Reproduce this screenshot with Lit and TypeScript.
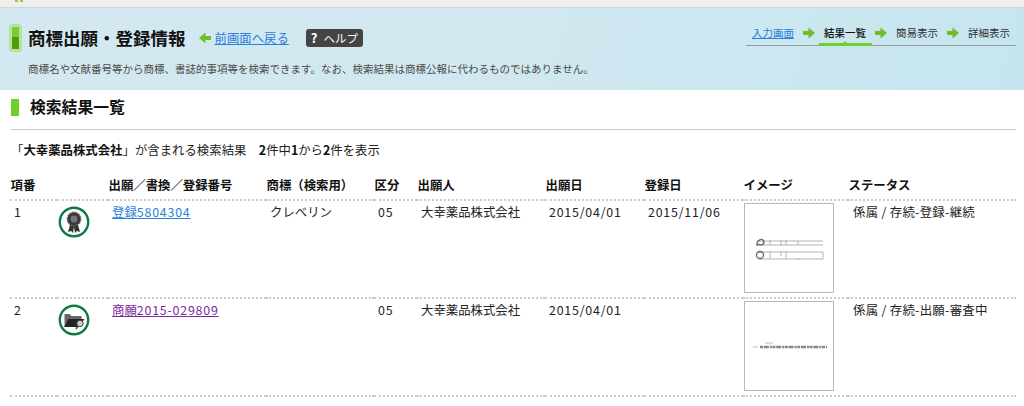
import { LitElement, html, css, svg } from "lit";
import { customElement } from "lit/decorators.js";

const ribbon = svg`<svg width="32" height="32" viewBox="0 0 32 32"><circle cx="16" cy="16" r="14.200" fill="#fff" stroke="#0f7a45" stroke-width="2.400"/>
<path d="M12.500 17 L10 26 L13.200 25 L15 27 L16 21 L17 27 L18.800 25 L22 26 L19.500 17Z" fill="#333"/>
<circle cx="16" cy="13" r="6.800" fill="#3a3a3a" stroke="#666" stroke-width="1.200" stroke-dasharray="2 1"/><circle cx="16" cy="13" r="3.400" fill="#777"/></svg>`;

const folder = svg`<svg width="32" height="32" viewBox="0 0 32 32"><circle cx="16" cy="16" r="14.200" fill="#fff" stroke="#0f7a45" stroke-width="2.400"/>
<path d="M6.500 22 V10 H11.500 L13.500 12 H23.500 V15 H10Z" fill="#666"/><path d="M6 23 L10 15 H26.500 L21 23Z" fill="#222"/>
<circle cx="22" cy="19.500" r="3.200" fill="#ccc" stroke="#444" stroke-width="1"/><path d="M20 22 L18 25" stroke="#444" stroke-width="1.500"/></svg>`;

const thumb1 = svg`<svg width="88" height="88" viewBox="0 0 88 88" class="blur"><g stroke="#aaa" stroke-width=".9" fill="none">
<path d="M12 37 H78 M12 41 H78 M14 48 H78 M14 55 H78 M78 48 V55"/><path d="M25 36 V41 M41 36 V41 M25 47 V54 M41 47 V55 M36 36 V41 M36 47 V52 M53 37 V41 M53 54 V56"/></g>
<g stroke="#666" stroke-width="1.300" fill="none"><path d="M12 42 C11 36 18 33 19 38 C19 42 14 41 13 40"/><circle cx="15" cy="51" r="3.500"/></g></svg>`;

const thumb2 = svg`<svg width="88" height="88" viewBox="0 0 88 88" class="blur"><path d="M15 45 H82" stroke="#888" stroke-width="2.600" stroke-dasharray="3 .8 5 1 2 .6"/><path d="M8 45 H13 M20 41 H28" stroke="#bbb" stroke-width="1"/></svg>`;

const arrow = (dir: "l" | "r") => svg`<svg class="arrow" width="12" height="12" viewBox="0 0 12 12"><path d="${dir === "r" ? "M0 4 H5.500 V.5 L12 6 L5.500 11.500 V8 H0Z" : "M12 4 H6.500 V.5 L0 6 L6.500 11.500 V8 H12Z"}" fill="#6ebd2b"/></svg>`;

const rows = [
  { n: "1", icon: ribbon, pre: "登録", num: "5804304", visited: false, mark: "クレベリン", cls: "05", who: "大幸薬品株式会社", d1: "2015/04/01", d2: "2015/11/06", thumb: thumb1, st: "係属 / 存続-登録-継続" },
  { n: "2", icon: folder, pre: "商願", num: "2015-029809", visited: true, mark: "", cls: "05", who: "大幸薬品株式会社", d1: "2015/04/01", d2: "", thumb: thumb2, st: "係属 / 存続-出願-審査中" },
];

const heads = ["項番", "", "出願／書換／登録番号", "商標（検索用）", "区分", "出願人", "出願日", "登録日", "イメージ", "ステータス"];

@customElement("app-root")
export class AppRoot extends LitElement {
  static styles = css`
    :host { display: block; width: 1024px; height: 406px; overflow: hidden; background: #fff; color: #222;
      font-family: "Noto Sans CJK JP", "Noto Sans", sans-serif; font-size: 12.4px; line-height: 18px; }
    a { color: #2a80d8; text-decoration: underline; }
    a.visited { color: #7a2a9e; }
    .top { height: 7px; background: #f0efee; border-bottom: 1px solid #d6d6d6; padding-left: 15px; display: flex; gap: 2px; }
    .top i { width: 3px; height: 2px; background: #8ed04e; }
    .hero { height: 82px; box-sizing: border-box; padding: 16px 8px 0 10px; display: flex; justify-content: space-between;
      background: linear-gradient(105deg, #d3e8f0 0%, #d2e8f0 45%, #cbe7f0 75%, #c6e5ef 100%); }
    .titlecol { display: flex; flex-direction: column; }
    .titlerow { display: flex; align-items: center; height: 28px; }
    .badge { width: 11px; height: 26px; box-sizing: border-box; border: 2px solid #b5e78f; border-radius: 2px; margin-right: 7px;
      background: linear-gradient(#7cc83a 0 45%, #4f9c12 45%); box-shadow: 0 0 0 .5px #8fd35a; }
    h1 { margin: 0; font-size: 17.500px; font-weight: 700; color: #111; white-space: nowrap; }
    .back { display: flex; align-items: center; gap: 4px; margin-left: 13px; }
    .help { margin-left: 17px; width: 57px; height: 18px; background: #444; color: #fff; border-radius: 3px; font-size: 11.500px;
      display: flex; align-items: center; justify-content: center; gap: 6px; }
    .help b { font-size: 13px; }
    .desc { margin: 9px 0 0 18px; font-size: 10.500px; line-height: 16px; color: #4a4a4a; white-space: nowrap; }
    .steps { display: flex; align-items: center; height: 24px; margin-top: -2px; align-self: flex-start; border-bottom: 1px solid #999;
      width: 270px; box-sizing: border-box; padding: 0 0 2px 6px; font-size: 10.500px; gap: 6px; }
    .steps span, .steps a { white-space: nowrap; width: 42px; flex: none; }
    .steps span { color: #333; }
    .steps .cur { font-weight: 500; color: #111; position: relative; }
    .steps .cur::after { content: ""; position: absolute; left: -5px; width: 53px; height: 3px; bottom: -4.500px; background: #6fcf2c; }
    .steps .cur::before { content: ""; position: absolute; left: 19px; bottom: -1.500px; border: 2px solid transparent; border-top: 0; border-bottom-color: #6fcf2c; }
    .steps .arrow { flex: none; margin: 0 3px; }
    .sec { display: flex; align-items: center; height: 17px; margin: 9px 0 0 11px; font-size: 15.800px; font-weight: 700; color: #111; }
    .sec i { width: 8px; height: 17px; background: #6fd02c; margin-right: 11px; }
    .sec span { margin-bottom: 2px; }
    .rule { height: 1px; background: #ccc; margin: 13px 8px 0 11px; }
    .summary { margin: 11px 0 0 11px; height: 18px; white-space: nowrap; }
    .summary b { font-weight: 700; color: #111; }
    .table { display: grid; margin: 19px 8px 0 10px; grid-template-columns: 47px 51px 158px 108px 43px 128px 99px 99px 105px 1fr; }
    .th { height: 23px; padding-left: .5px; font-weight: 700; color: #111; white-space: nowrap; border-bottom: 2px dotted #ccc; line-height: 14px; box-sizing: border-box; }
    .td { height: 98px; padding: 2px 4px 0; box-sizing: border-box; border-bottom: 2px dotted #ccc; white-space: nowrap; }
    .ic { padding: 5px 0 0 1px; }
    .im { padding: 2px 0 0 1px; }
    .num { letter-spacing: .8px; }
    .st { letter-spacing: .3px; padding-left: 5px; }
    .frame { width: 90px; height: 90px; box-sizing: border-box; border: 1px solid #b9b9b0; }
    .blur { display: block; filter: blur(.6px); }
    .ic svg { display: block; }
  `;
  render() {
    return html`
      <div class="top"><i></i><i></i></div>
      <header class="hero">
        <div class="titlecol">
          <div class="titlerow">
            <div class="badge"></div>
            <h1>商標出願・登録情報</h1>
            <span class="back">${arrow("l")}<a href="#">前画面へ戻る</a></span>
            <span class="help"><b>?</b>ヘルプ</span>
          </div>
          <p class="desc">商標名や文献番号等から商標、書誌的事項等を検索できます。なお、検索結果は商標公報に代わるものではありません。</p>
        </div>
        <nav class="steps">
          <a href="#">入力画面</a>${arrow("r")}<span class="cur">結果一覧</span>${arrow("r")}<span>簡易表示</span>${arrow("r")}<span>詳細表示</span>
        </nav>
      </header>
      <div class="sec"><i></i><span>検索結果一覧</span></div>
      <div class="rule"></div>
      <div class="summary">「<b>大幸薬品株式会社</b>」が含まれる検索結果　<b>2</b>件中<b>1</b>から<b>2</b>件を表示</div>
      <div class="table">
        ${heads.map((h) => html`<div class="th">${h}</div>`)}
        ${rows.map((r) => html`
          <div class="td">${r.n}</div>
          <div class="td ic">${r.icon}</div>
          <div class="td"><a href="#" class=${r.visited ? "visited" : ""}>${r.pre}<span class="num">${r.num}</span></a></div>
          <div class="td">${r.mark}</div>
          <div class="td num">${r.cls}</div>
          <div class="td">${r.who}</div>
          <div class="td num">${r.d1}</div>
          <div class="td num">${r.d2}</div>
          <div class="td im"><div class="frame">${r.thumb}</div></div>
          <div class="td st">${r.st}</div>
        `)}
      </div>
    `;
  }
}
